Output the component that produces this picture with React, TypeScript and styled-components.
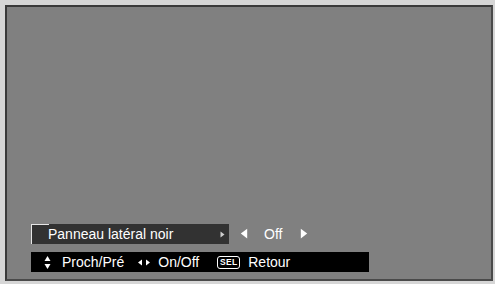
import React from "react";
import styled, { createGlobalStyle } from "styled-components";

const Global = createGlobalStyle`
  html, body { margin: 0; padding: 0; background: #d6d6d6; }
  body { font-family: "Liberation Sans", Arial, sans-serif; }
`;

const Frame = styled.div`
  width: 495px;
  height: 284px;
  box-sizing: border-box;
  padding: 5px 2px 3px 5px;
  display: flex;
`;

const Screen = styled.div`
  flex: 1;
  background: #808080;
  border: 2px solid #3a3a3a;
  border-right-color: #4a4a4a;
  border-bottom-color: #4a4a4a;
  display: flex;
  flex-direction: column;
  justify-content: flex-end;
  padding: 0 0 7px 24px;
  gap: 8px;
`;

const MenuRow = styled.div`
  display: flex;
  align-items: center;
  height: 20px;
  color: #fff;
  font-size: 14px;
`;

const MenuItem = styled.div`
  position: relative;
  width: 198px;
  height: 20px;
  box-sizing: border-box;
  background: #323232;
  border-left: 1px solid #e6e6e6;
  display: flex;
  align-items: center;
  justify-content: space-between;
  padding: 0 4px 0 16px;
  &::before {
    content: "";
    position: absolute;
    left: 0;
    top: 0;
    width: 17px;
    height: 1px;
    background: #e6e6e6;
  }
`;

const Value = styled.div`
  display: flex;
  align-items: center;
  padding-left: 11px;
`;

const ValueText = styled.span`
  padding: 0 18px 0 16px;
`;

const HelpBar = styled.div`
  width: 338px;
  height: 20px;
  background: #000;
  color: #fff;
  font-size: 14px;
  display: flex;
  align-items: center;
  padding-left: 13px;
  box-sizing: border-box;
`;

const HelpItem = styled.div<{ $gap: number; $ml: number }>`
  display: flex;
  align-items: center;
  gap: ${(p) => p.$gap}px;
  margin-left: ${(p) => p.$ml}px;
`;

const SelBox = styled.span`
  display: inline-flex;
  align-items: center;
  justify-content: center;
  width: 23px;
  height: 13px;
  border: 1px solid #fff;
  border-radius: 3px;
  font-size: 8.5px;
  font-weight: bold;
  letter-spacing: 0.3px;
  box-sizing: border-box;
`;

const Tri = ({ dir, size, color }: { dir: "l" | "r"; size: number; color: string }) => (
  <svg width={size} height={size * 1.4} viewBox="0 0 10 14">
    {dir === "r" ? (
      <polygon points="1,1 9,7 1,13" fill={color} />
    ) : (
      <polygon points="9,1 1,7 9,13" fill={color} />
    )}
  </svg>
);

const UpDown = () => (
  <svg width="7" height="15" viewBox="0 0 7 15">
    <polygon points="3.5,1 6.5,6 0.5,6" fill="#fff" />
    <polygon points="0.5,9 6.5,9 3.5,14" fill="#fff" />
  </svg>
);

const LeftRight = () => (
  <svg width="14" height="7" viewBox="0 0 14 7">
    <polygon points="5,0.5 5,6.5 1,3.5" fill="#fff" />
    <polygon points="9,0.5 9,6.5 13,3.5" fill="#fff" />
  </svg>
);

export default function App() {
  return (
    <>
      <Global />
      <Frame>
        <Screen>
          <MenuRow>
            <MenuItem>
              <span>Panneau latéral noir</span>
              <Tri dir="r" size={5} color="#cfcfcf" />
            </MenuItem>
            <Value>
              <Tri dir="l" size={8} color="#fff" />
              <ValueText>Off</ValueText>
              <Tri dir="r" size={8} color="#fff" />
            </Value>
          </MenuRow>
          <HelpBar>
            <HelpItem $gap={11} $ml={0}>
              <UpDown />
              <span>Proch/Pré</span>
            </HelpItem>
            <HelpItem $gap={7} $ml={13}>
              <LeftRight />
              <span>On/Off</span>
            </HelpItem>
            <HelpItem $gap={8} $ml={18}>
              <SelBox>SEL</SelBox>
              <span>Retour</span>
            </HelpItem>
          </HelpBar>
        </Screen>
      </Frame>
    </>
  );
}
